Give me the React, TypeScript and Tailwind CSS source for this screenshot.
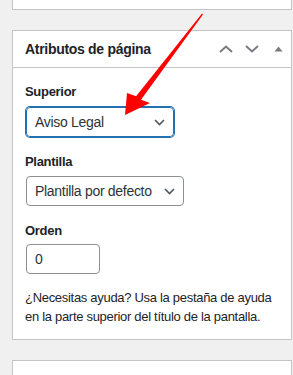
import React from "react";

const Chevron = ({ className = "" }: { className?: string }) => (
  <svg width="11" height="7" viewBox="0 0 11 7" className={className}>
    <polyline points="1,1 5.5,5.5 10,1" fill="none" stroke="#50575e" strokeWidth="1.6" />
  </svg>
);

export default function App() {
  return (
    <div
      className="relative w-[293px] h-[375px] overflow-hidden bg-[#f0f0f1] pl-[12px] pr-[1px] tracking-[-0.3px]"
      style={{ fontFamily: '"Liberation Sans", Arial, sans-serif' }}
    >
      <div className="h-[10px] border border-t-0 border-[#c3c4c7] bg-white" />

      <div className="mt-[20px] border border-[#c3c4c7] bg-white">
        <div className="flex h-[37px] items-center justify-between border-b border-[#c3c4c7] pl-[12px] pr-[8px]">
          <h2 className="text-[14px] font-semibold text-[#1d2327]">Atributos de página</h2>
          <div className="flex items-center">
            <svg width="16" height="10" viewBox="0 0 16 10" className="mr-[10px]">
              <polyline points="2,8 8,2.5 14,8" fill="none" stroke="#787c82" strokeWidth="2" />
            </svg>
            <svg width="16" height="10" viewBox="0 0 16 10" className="mr-[14px]">
              <polyline points="2,2 8,7.5 14,2" fill="none" stroke="#787c82" strokeWidth="2" />
            </svg>
            <svg width="9" height="6" viewBox="0 0 9 6" className="mb-[1px]">
              <polygon points="0.5,5.5 4.5,0.5 8.5,5.5" fill="#787c82" />
            </svg>
          </div>
        </div>

        <div className="px-[12px] pb-[13px] text-[#1d2327]">
          <p className="mt-[14px] text-[13px] font-semibold leading-[19px]">Superior</p>
          <div className="mt-[6px] flex h-[30px] w-[148px] items-center justify-between rounded-[4px] border border-[#2271b1] pl-[8px] pr-[8px] shadow-[0_0_0_1px_#2271b1] ml-[1px]">
            <span className="text-[14px] text-[#2c3338]">Aviso Legal</span>
            <Chevron />
          </div>

          <p className="mt-[15px] text-[13px] font-semibold leading-[19px]">Plantilla</p>
          <div className="mt-[5px] ml-[1px] flex h-[30px] w-[158px] items-center justify-between rounded-[4px] border border-[#8c8f94] pl-[8px] pr-[8px]">
            <span className="text-[14px] text-[#2c3338] whitespace-nowrap">Plantilla por defecto</span>
            <Chevron />
          </div>

          <p className="mt-[15px] text-[13px] font-semibold leading-[19px]">Orden</p>
          <div className="mt-[4px] ml-[1px] flex h-[30px] w-[74px] items-center rounded-[4px] border border-[#8c8f94] pl-[8px]">
            <span className="text-[14px] text-[#2c3338]">0</span>
          </div>

          <p className="mt-[14px] text-[13px] leading-[19px] text-[#1d2327]">
            ¿Necesitas ayuda? Usa la pestaña de ayuda en la parte superior del título de la pantalla.
          </p>
        </div>
      </div>

      <div className="mt-[20px] h-[40px] border border-b-0 border-[#c3c4c7] bg-white" />

      <svg className="pointer-events-none absolute left-0 top-0" width="293" height="375" viewBox="0 0 293 375">
        <polygon
          points="202,13.5 203,14.5 141,99.8 150,103 125,115 127,93 136.1,96.2"
          fill="#f00"
        />
      </svg>
    </div>
  );
}
